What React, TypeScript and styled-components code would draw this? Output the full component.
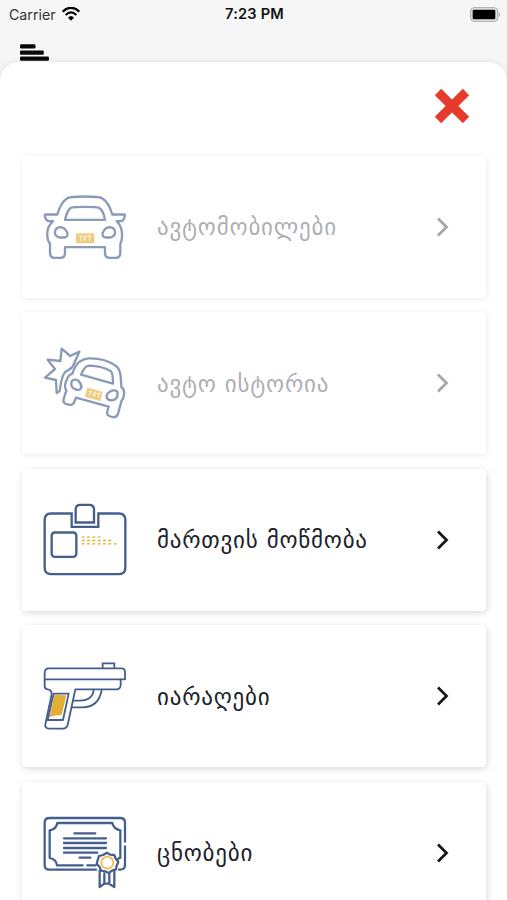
import React from 'react';
import styled, { createGlobalStyle } from 'styled-components';

const GlobalStyle = createGlobalStyle`
  * { box-sizing: border-box; }
  html, body { margin: 0; padding: 0; }
  body { background: #f6f6f6; font-family: Inter, "DejaVu Sans", sans-serif; }
`;

const Screen = styled.div`
  width: 507px;
  height: 900px;
  overflow: hidden;
  display: flex;
  flex-direction: column;
  background: #f6f6f6;
`;

const StatusBar = styled.header`
  flex: none;
  height: 28px;
  display: grid;
  grid-template-columns: 1fr auto 1fr;
  align-items: center;
  padding: 0 7px 0 9px;
  color: #111;
  font-size: 14.2px;
`;

const Carrier = styled.div`
  display: flex;
  align-items: center;
  gap: 6px;
  color: #333;
`;

const Clock = styled.div`
  font-weight: 600;
  font-size: 14.6px;
  letter-spacing: 0.2px;
`;

const BatterySlot = styled.div`
  display: flex;
  justify-content: flex-end;
  margin-right: -1px;
  svg { display: block; }
`;

const MenuBars = styled.div`
  flex: none;
  height: 34px;
  padding: 16px 0 0 20px;
  svg { display: block; }
`;

const Sheet = styled.main`
  flex: 1;
  min-height: 0;
  background: #fff;
  border-radius: 19px 19px 0 0;
  box-shadow: 0 0 7px rgba(0, 0, 0, 0.09);
`;

const SheetHeader = styled.div`
  height: 93.5px;
  display: flex;
  justify-content: flex-end;
  padding: 26px 37px 0 0;
`;

const CloseButton = styled.button`
  width: 36px;
  height: 36px;
  padding: 0;
  border: 0;
  background: none;
  svg { display: block; }
`;

const List = styled.nav`
  display: flex;
  flex-direction: column;
  gap: 14.5px;
  padding: 0 21px 0 22px;
`;

const Card = styled.a<{ $muted?: boolean }>`
  flex: none;
  height: 142px;
  display: flex;
  align-items: center;
  padding: 0 37px 0 8px;
  border-radius: 4px;
  background: #fff;
  color: #20222c;
  box-shadow: ${(p) =>
    p.$muted
      ? '1px 1px 6px rgba(0, 0, 0, 0.085)'
      : '1px 2px 7px rgba(0, 0, 0, 0.15)'};
`;

const IconSlot = styled.span<{ $muted?: boolean }>`
  width: 110px;
  height: 100px;
  opacity: ${(p) => (p.$muted ? 0.62 : 1)};
  svg { display: block; }
`;

const Label = styled.span<{ $muted?: boolean }>`
  flex: 1;
  padding: 1px 0 0 17px;
  font-family: "DejaVu Sans", sans-serif;
  font-size: 23px;
  line-height: 30px;
  white-space: nowrap;
  letter-spacing: 0.78px;
  opacity: ${(p) => (p.$muted ? 0.36 : 1)};
`;

const Chevron = styled.svg<{ $muted?: boolean }>`
  flex: none;
  opacity: ${(p) => (p.$muted ? 0.38 : 1)};
`;

const NAVY = '#445f8e';
const GOLD = '#e4ad35';

const Drawing = ({ top, children }: { top: number; children: React.ReactNode }) => (
  <svg
    width="110"
    height="100"
    viewBox={`0 ${top} 330 300`}
    fill="none"
    stroke={NAVY}
    strokeWidth="7"
    strokeLinecap="round"
    strokeLinejoin="round"
  >
    {children}
  </svg>
);

const CarIcon = () => (
  <Drawing top={-10.5}>
    <path d="M82 102 C89 78 98 61 112 53 Q122 48 164 48 Q206 48 216 53 C230 61 240 78 247 102 L282 102 Q286 102 284 108 Q281 122 272 122 L260 122 Q278 140 276 168 Q276 182 271 190 L271 216 Q271 232 258 232 L239 232 Q225 232 225 218 L225 200 L105 200 L105 218 Q105 232 91 232 L73 232 Q60 232 60 216 L60 190 Q52 180 52 165 Q50 140 69 122 L58 122 Q48 122 45 108 Q43 102 48 102 Z" />
    <path d="M105 118 C109 100 115 88 122 82 Q126 79 164 79 Q202 79 207 82 C216 88 222 100 225 118 Z" />
    <path d="M77 147 Q82 140 92 140 Q104 141 111 155 Q117 169 103 171 L91 171 Q79 170 75 160 Q74 152 77 147 Z" />
    <path d="M253 147 Q248 140 238 140 Q226 141 219 155 Q213 169 227 171 L239 171 Q251 170 255 160 Q256 152 253 147 Z" />
    <rect x="138" y="158" width="55" height="30" rx="3" fill={GOLD} stroke="none" />
    <path d="M149 167 H157 M153 167 V180 M163 180 V167 H169 M163 173 H168 M174 167 H183 M178.500 167 V180" stroke="#fff" strokeWidth="2.5" />
  </Drawing>
);

const CrashIcon = () => (
  <Drawing top={-6}>
    <path d="M148 50 L121 63 L95 41 L91 78 L53 74 L75 102 L45 128 L78 135 L80 174 L89 168 Q92 140 99 121 Q105 109 117 104 Q130 96 134 82 Z" />
    <path d="M132 103 C141 82 154 72 176 70 C208 69 239 79 258 93 C272 104 273 126 274 156 Q284 163 282 179 Q281 190 274 199 L264 237 Q260 248 247 246 L238 243 Q229 239 232 228 L236 215 L138 188 L132 202 Q128 212 116 209 L108 207 Q98 203 101 192 L109 167 Q101 153 110 135 Q115 120 127 116 Z" />
    <path d="M153 119 C161 100 169 92 178 92 C205 93 227 99 243 109 Q249 115 249 146 Z" />
    <path d="M125 139 Q132 130 145 137 Q155 147 154 158 Q151 168 137 163 Q119 157 125 139 Z" />
    <path d="M263 175 Q261 163 246 167 Q229 174 230 186 Q231 195 246 196 Q263 195 263 175 Z" />
    <path d="M172 158 L218 170 L211 198 L164 185 Z" fill={GOLD} stroke="none" />
    <path d="M178 169 L186 171 M182 170 L179 182 M190 184 L193 173 L199 175 M191 179 L197 180 M203 175 L211 177 M207 176 L204 188" stroke="#fff" strokeWidth="2.5" />
  </Drawing>
);

const LicenseIcon = () => (
  <Drawing top={0.5}>
    <path d="M125 71 H63 Q44 71 44 90 V234 Q44 253 63 253 H267 Q286 253 286 234 V90 Q286 71 267 71 H205 V111 H125 Z" strokeLinejoin="miter" />
    <path d="M137 98 V59 Q137 45 151 45 H178 Q192 45 192 59 V98 Z" strokeLinejoin="miter" />
    <rect x="65" y="128" width="74" height="73" rx="9" />
    <path d="M155 142 H213 M155 152 H246 M155 162 H261" stroke={GOLD} strokeWidth="4" strokeDasharray="9 7" strokeLinecap="butt" />
  </Drawing>
);

const GunIcon = () => (
  <Drawing top={3}>
    <g strokeWidth="5.5">
      <path d="M57 70 H273 Q285 70 285 80 V103 H272 V121 Q270 133 260 133 H136 L113 240 Q109 251 100 251 H60 Q44 251 46 238 L65 148 Q65 134 53 133 Q44 132 44 123 V84 Q44 70 57 70 Z" />
      <path d="M45 103 H272" />
      <path d="M218 69 V55 H253 V69" strokeLinejoin="miter" />
      <path d="M191 135 Q188 166 149 167 H130 M215 135 Q206 187 157 187 H126" />
      <path d="M71 146 H116 L99 225 H53 Z" />
      <path d="M73 150 L109 151 L95 210 Q74 210 59 217 Z" fill={GOLD} stroke="none" />
    </g>
  </Drawing>
);

const CertificateIcon = () => (
  <Drawing top={9}>
    <g strokeWidth="6.8">
      <path d="M285 125 V68 Q285 54 271 54 H58 Q44 54 44 68 V195 Q44 209 58 209 H198 M285 139 V195 Q285 207 272 209 H267" />
      <path d="M158 196 H81 Q79 178 59 174 V91 Q79 88 82 69 H247 Q251 87 271 91 V174 Q267 174 264 177 M172 196 H197" />
      <path d="M133 100 H196 M102 115 H228 M102 129 H228 M102 144 H228 M102 158 H202 M149 173 H181" />
      <path d="M209 211 V261 L223 251 L231 251 L237 251 L253 261 V211 M223 220 V251 M238 220 V251" />
      <path d="M231 158 L241 164 L253 165 L257 176 L265 186 L260 197 L258 208 L246 212 L236 219 L225 214 L213 212 L209 201 L200 192 L203 180 L207 168 L219 165 Z" fill="#fff" />
    </g>
    <circle cx="232" cy="188" r="18" stroke="#f0c15c" strokeWidth="6" />
  </Drawing>
);

const WifiIcon = () => (
  <svg width="18" height="14" viewBox="0 0 54 42" fill="none" stroke="#050505">
    <path d="M2 14 Q27 -9 52 14" strokeWidth="7" />
    <path d="M11 24 Q27 8 43 24" strokeWidth="6.5" />
    <path d="M18 32 Q27 22 36 32 L27 41 Z" fill="#050505" stroke="none" />
  </svg>
);

const BatteryIcon = () => (
  <svg width="31" height="15" viewBox="0 0 93 45">
    <rect x="2" y="2" width="81" height="41" rx="10" fill="#e5e5e5" stroke="#aaa" strokeWidth="3" />
    <rect x="8" y="8" width="68" height="29" rx="4" fill="#000" />
    <path d="M86 15 Q93 22.500 86 30 Z" fill="#999" />
  </svg>
);

const MenuIcon = () => (
  <svg width="30" height="18" viewBox="0 0 30 18" fill="#080808">
    <rect x="0" y="0.3" width="15.500" height="4.300" rx="1.300" />
    <rect x="0" y="6.400" width="23.800" height="4.300" rx="1.300" />
    <rect x="0" y="12.500" width="29" height="4.300" rx="1.300" />
  </svg>
);

const items = [
  { label: 'ავტომობილები', muted: true, Icon: CarIcon },
  { label: 'ავტო ისტორია', muted: true, Icon: CrashIcon },
  { label: 'მართვის მოწმობა', muted: false, Icon: LicenseIcon },
  { label: 'იარაღები', muted: false, Icon: GunIcon },
  { label: 'ცნობები', muted: false, Icon: CertificateIcon },
];

export default function App() {
  return (
    <Screen>
      <GlobalStyle />
      <StatusBar>
        <Carrier>
          Carrier
          <WifiIcon />
        </Carrier>
        <Clock>7:23 PM</Clock>
        <BatterySlot>
          <BatteryIcon />
        </BatterySlot>
      </StatusBar>
      <MenuBars>
        <MenuIcon />
      </MenuBars>
      <Sheet>
        <SheetHeader>
          <CloseButton aria-label="Close">
            <svg width="36" height="36" viewBox="0 0 36 36">
              <path d="M4 4 L32 32 M32 4 L4 32" stroke="#e63b2c" strokeWidth="9" />
            </svg>
          </CloseButton>
        </SheetHeader>
        <List>
          {items.map(({ label, muted, Icon }) => (
            <Card key={label} $muted={muted}>
              <IconSlot $muted={muted}>
                <Icon />
              </IconSlot>
              <Label $muted={muted}>{label}</Label>
              <Chevron $muted={muted} width="13" height="22" viewBox="0 0 13 22" fill="none">
                <path d="M2 2.500 L10.500 11 L2 19.500" stroke="#17181e" strokeWidth="2.800" />
              </Chevron>
            </Card>
          ))}
        </List>
      </Sheet>
    </Screen>
  );
}
